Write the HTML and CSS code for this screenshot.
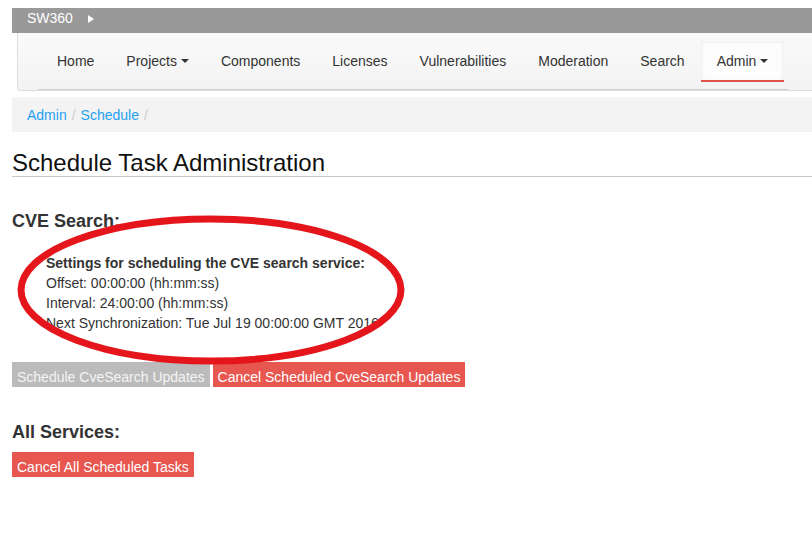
FILE: index.html
```html
<!DOCTYPE html>
<html>
<head>
<meta charset="utf-8">
<title>Schedule Task Administration</title>
<link rel="stylesheet" href="styles.css">
</head>
<body>
<div class="page">
  <div class="topbar"><span class="brand">SW360</span><span class="tri"></span></div>
  <div class="navbar">
    <ul class="nav">
      <li class="item">Home</li>
      <li class="item">Projects<span class="caret"></span></li>
      <li class="item">Components</li>
      <li class="item">Licenses</li>
      <li class="item">Vulnerabilities</li>
      <li class="item">Moderation</li>
      <li class="item">Search</li>
      <li class="item active">Admin<span class="caret"></span></li>
    </ul>
  </div>
  <div class="breadcrumb">
    <a class="crumb">Admin</a><span class="sep">/</span><a class="crumb">Schedule</a><span class="sep">/</span>
  </div>
  <h1 class="title">Schedule Task Administration</h1>
  <h3 class="section">CVE Search:</h3>
  <div class="settings">
    <div class="bold">Settings for scheduling the CVE search service:</div>
    <div>Offset: 00:00:00 (hh:mm:ss)</div>
    <div>Interval: 24:00:00 (hh:mm:ss)</div>
    <div>Next Synchronization: Tue Jul 19 00:00:00 GMT 2016</div>
  </div>
  <div class="buttons">
    <span class="btn gray">Schedule CveSearch Updates</span>
    <span class="btn red">Cancel Scheduled CveSearch Updates</span>
  </div>
  <h3 class="section section2">All Services:</h3>
  <div class="buttons buttons2">
    <span class="btn red">Cancel All Scheduled Tasks</span>
  </div>
</div>
<svg class="annot" width="812" height="535" viewBox="0 0 812 535">
  <ellipse cx="211" cy="290" rx="190" ry="71" fill="none" stroke="#e4161c" stroke-width="7"/>
</svg>
</body>
</html>
```
FILE: styles.css
```css
html, body {
  margin: 0;
  padding: 0;
  background: #fff;
}
body {
  font-family: "Liberation Sans", Arial, sans-serif;
  font-size: 14px;
  color: #333;
  position: relative;
  width: 812px;
  height: 535px;
  overflow: hidden;
}
.page {
  padding-top: 8px;
  padding-left: 12px;
}
.topbar {
  height: 25px;
  line-height: 20px;
  background: #999;
  color: #fff;
  padding-left: 15px;
  display: flex;
  align-items: flex-start;
}
.brand {
  font-size: 14px;
}
.tri {
  width: 0;
  height: 0;
  border-left: 6px solid #fff;
  border-top: 4.5px solid transparent;
  border-bottom: 4.5px solid transparent;
  margin-left: 15px;
  margin-top: 7px;
}
.navbar {
  margin-left: 5px;
  padding-top: 8px;
  height: 49px;
  background: linear-gradient(#fafafa, #f3f3f3);
  border-left: 1px solid #dcdcdc;
  border-bottom: 1px solid #dcdcdc;
  border-bottom-left-radius: 4px;
}
.nav {
  list-style: none;
  margin: 0 0 0 20px;
  padding: 0 0 7px 3px;
  width: 747px;
  display: flex;
  border-bottom: 1px solid #d2d2d2;
}
.item {
  padding: 0 16px;
  line-height: 41px;
  height: 41px;
  color: #333;
  white-space: nowrap;
}
.item.active {
  background: #fdfdfd;
  box-shadow: inset 0 -2px 0 #e0524d, inset 0 0 5px rgba(0, 0, 0, 0.09);
}
.caret {
  display: inline-block;
  width: 0;
  height: 0;
  border-top: 4px solid #333;
  border-left: 4px solid transparent;
  border-right: 4px solid transparent;
  margin-left: 4px;
  vertical-align: middle;
  position: relative;
  top: -1px;
}
.breadcrumb {
  margin-top: 6px;
  height: 34px;
  padding: 1px 15px 0;
  line-height: 35px;
  background: #f3f3f3;
}
.crumb {
  color: #1ea1f2;
}
.sep {
  color: #ccc;
  padding: 0 5px;
}
.title {
  margin: 18px 0 0;
  font-size: 24px;
  line-height: 26px;
  font-weight: normal;
  color: #111;
  border-bottom: 1px solid #c8c8c8;
}
.section {
  margin: 34px 0 0;
  font-size: 18px;
  line-height: 20px;
  font-weight: bold;
  color: #333;
}
.section2 {
  margin-top: 35px;
}
.settings {
  margin-top: 22px;
  padding-left: 34px;
  line-height: 20px;
}
.bold {
  font-weight: bold;
}
.buttons {
  margin-top: 29px;
  display: flex;
  gap: 3px;
}
.buttons2 {
  margin-top: 10px;
}
.btn {
  display: block;
  padding: 6px 5px 0;
  line-height: 19px;
  color: #fff;
}
.btn.gray {
  background: #bbbbbb;
  color: #f4f4f4;
}
.btn.red {
  background: #e85650;
}
.annot {
  position: absolute;
  left: 0;
  top: 0;
  pointer-events: none;
}
```
